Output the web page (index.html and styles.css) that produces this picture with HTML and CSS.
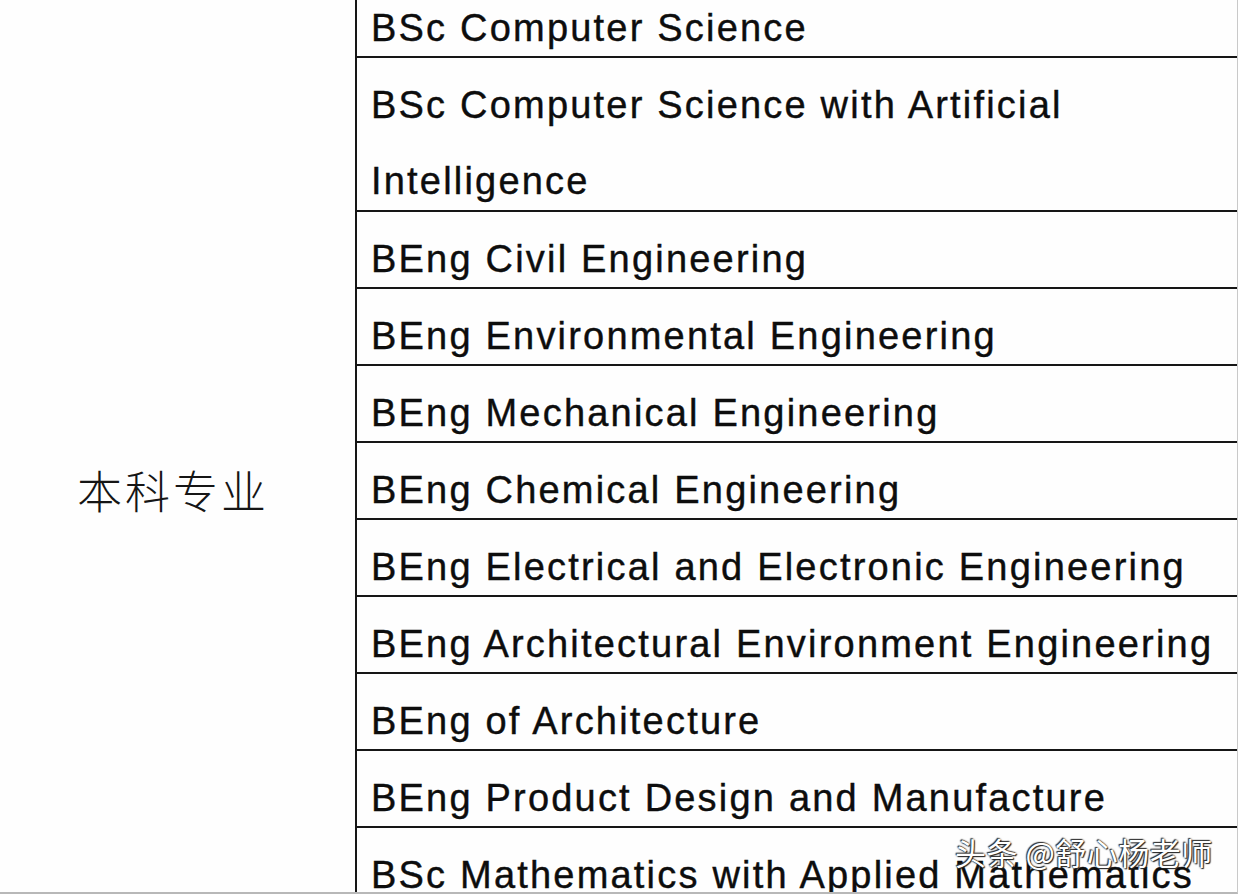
FILE: index.html
```html
<!DOCTYPE html>
<html lang="zh">
<head>
<meta charset="utf-8">
<title>本科专业</title>
<link rel="stylesheet" href="styles.css">
</head>
<body>
<div class="page">
  <div class="table">
    <div class="cat"><span class="cat-text">本科专业</span></div>
    <div class="list">
      <div class="row">BSc Computer Science</div>
      <div class="row tall">BSc Computer Science with Artificial Intelligence</div>
      <div class="row">BEng Civil Engineering</div>
      <div class="row">BEng Environmental Engineering</div>
      <div class="row">BEng Mechanical Engineering</div>
      <div class="row">BEng Chemical Engineering</div>
      <div class="row">BEng Electrical and Electronic Engineering</div>
      <div class="row">BEng Architectural Environment Engineering</div>
      <div class="row">BEng of Architecture</div>
      <div class="row">BEng Product Design and Manufacture</div>
      <div class="row">BSc Mathematics with Applied Mathematics</div>
    </div>
  </div>
  <div class="watermark">头条 @舒心杨老师</div>
</div>
</body>
</html>
```

FILE: styles.css
```css
html, body {
  margin: 0;
  padding: 0;
  background: #ffffff;
}

.page {
  position: relative;
  width: 1238px;
  height: 894px;
  box-sizing: border-box;
  overflow: hidden;
  background: #fefefe;
  border-right: 1px solid #c9c9c9;
  border-bottom: 2px solid #b8b8b8;
}

.table {
  display: grid;
  grid-template-columns: 357px 1fr;
  margin-top: -19px;
  color: #0d0d0d;
}

.cat {
  display: flex;
  align-items: center;
  padding-left: 77px;
  padding-top: 92px;
  border-right: 2px solid #161616;
}

.cat-text {
  font-family: "Noto Sans CJK SC", sans-serif;
  font-weight: 300;
  font-size: 45px;
  letter-spacing: 3px;
  color: #151515;
}

.list {
  display: flex;
  flex-direction: column;
}

.row {
  box-sizing: border-box;
  height: 77px;
  padding: 9px 10px 0 14px;
  border-bottom: 2px solid #161616;
  font-family: "Liberation Sans", Arial, sans-serif;
  font-size: 38px;
  letter-spacing: 2.2px;
  line-height: 76px;
  white-space: nowrap;
  -webkit-text-stroke: 0.4px #0d0d0d;
}

.row.tall {
  height: 154px;
  white-space: normal;
  padding-right: 170px;
}

.watermark {
  position: absolute;
  left: 955px;
  top: 829px;
  font-family: "Noto Sans CJK SC", sans-serif;
  font-size: 31px;
  color: #ffffff;
  letter-spacing: 0.5px;
  text-shadow: 0 0 2px #222, 1px 1px 1px #222, -1px -1px 1px #333;
  white-space: nowrap;
}
```
